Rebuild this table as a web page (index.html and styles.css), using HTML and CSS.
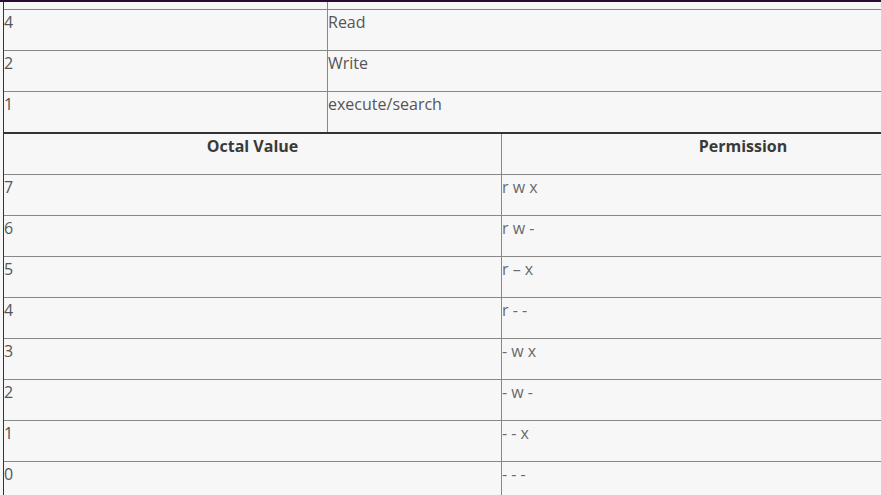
FILE: index.html
```html
<!DOCTYPE html>
<html>
<head>
<meta charset="utf-8">
<link rel="stylesheet" href="styles.css">
</head>
<body>
<div class="topbar"></div>
<div class="content">
  <table class="tbl tbl-bits">
    <tr class="partial"><td class="c1"></td><td></td></tr>
    <tr><td class="c1">4</td><td>Read</td></tr>
    <tr><td class="c1">2</td><td>Write</td></tr>
    <tr class="last"><td class="c1">1</td><td>execute/search</td></tr>
  </table>
  <table class="tbl tbl-octal">
    <tr class="head"><th class="c1">Octal Value</th><th>Permission</th></tr>
    <tr><td class="c1">7</td><td class="perm">r w x</td></tr>
    <tr><td class="c1">6</td><td class="perm">r w -</td></tr>
    <tr><td class="c1">5</td><td class="perm">r – x</td></tr>
    <tr><td class="c1">4</td><td class="perm">r - -</td></tr>
    <tr><td class="c1">3</td><td class="perm">- w x</td></tr>
    <tr><td class="c1">2</td><td class="perm">- w -</td></tr>
    <tr><td class="c1">1</td><td class="perm">- - x</td></tr>
    <tr><td class="c1">0</td><td class="perm">- - -</td></tr>
  </table>
</div>
</body>
</html>
```
FILE: styles.css
```css
html, body {
  margin: 0;
  padding: 0;
  background: #f7f7f7;
  overflow: hidden;
}
body {
  font-family: "Open Sans", "DejaVu Sans", sans-serif;
  font-size: 16px;
  color: #555;
}
.topbar {
  height: 2px;
  background: #2a0b31;
}
.content {
  margin-left: 3px;
  width: 878px;
  overflow: hidden;
}
.tbl {
  border-collapse: separate;
  border-spacing: 0;
  table-layout: fixed;
  width: 982px;
  border-left: 1px solid #333;
}
.tbl td, .tbl th {
  padding: 0;
  height: 40px;
  vertical-align: top;
  text-align: left;
  border-right: 1px solid #888;
  border-bottom: 1px solid #888;
  line-height: 24px;
  font-weight: 400;
}
.tbl-bits .c1 { width: 323px; }
.tbl-bits .partial td { height: 7px; }
.tbl-bits .last td { border-bottom: 0; }
.tbl-octal {
  border-top: 2px solid #333;
}
.tbl-octal .c1 { width: 497px; }
.tbl-octal th {
  text-align: center;
  font-weight: 700;
  color: #3a3a3a;
  font-size: 16px;
  line-height: 24px;
}
.tbl-octal td.perm {
  font-size: 16px;
  color: #6a6a6a;
  line-height: 25px;
}
```
